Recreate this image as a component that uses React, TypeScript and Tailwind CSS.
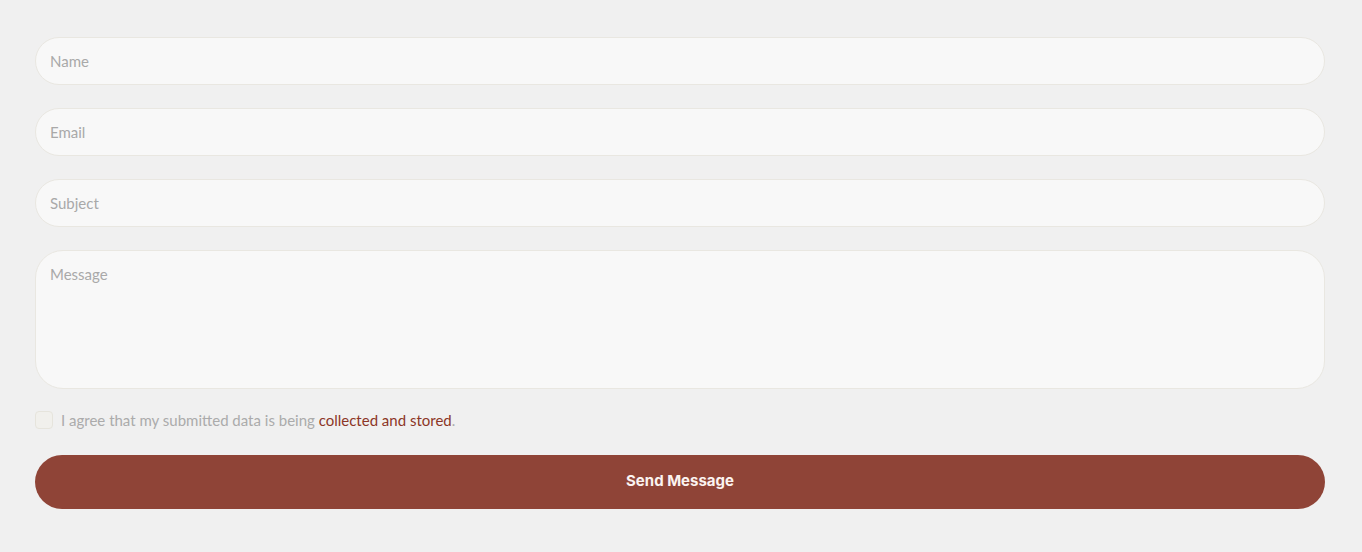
import React from "react";

export default function App() {
  const inputCls =
    "w-full h-[48px] rounded-full border border-[#e9e7e1] bg-[#f8f8f8] px-[14px] text-[15px] text-[#555] placeholder:text-[#a9a9a9] outline-none";
  return (
    <div className="min-h-[552px] w-full bg-[#f0f0f0] pl-[35px] pt-[37px]" style={{ fontFamily: "Lato, 'Open Sans', sans-serif" }}>
      <form className="flex w-[1290px] flex-col" onSubmit={(e) => e.preventDefault()}>
        <input className={inputCls} placeholder="Name" />
        <input className={inputCls + " mt-[23px]"} placeholder="Email" />
        <input className={inputCls + " mt-[23px]"} placeholder="Subject" />
        <textarea
          className="mt-[23px] h-[139px] w-full resize-none rounded-[28px] border border-[#e9e7e1] bg-[#f8f8f8] px-[14px] pt-[12px] text-[15px] text-[#555] placeholder:text-[#a9a9a9] outline-none"
          placeholder="Message"
        />
        <label className="mt-[20px] flex items-center gap-[8px] text-[15px] text-[#ababab]">
          <span className="h-[18px] w-[18px] rounded-[4px] border border-[#e6e4dc] bg-[#f1f0ec]" />
          <span>
            I agree that my submitted data is being{" "}
            <a className="text-[#8c3627]">collected and stored</a>.
          </span>
        </label>
        <button
          type="submit"
          className="mt-[23px] h-[54px] w-full rounded-full bg-[#8f4437] text-[15px] font-bold text-[#fbf3f0]"
          style={{ fontFamily: "Inter, sans-serif" }}
        >
          Send Message
        </button>
      </form>
    </div>
  );
}
